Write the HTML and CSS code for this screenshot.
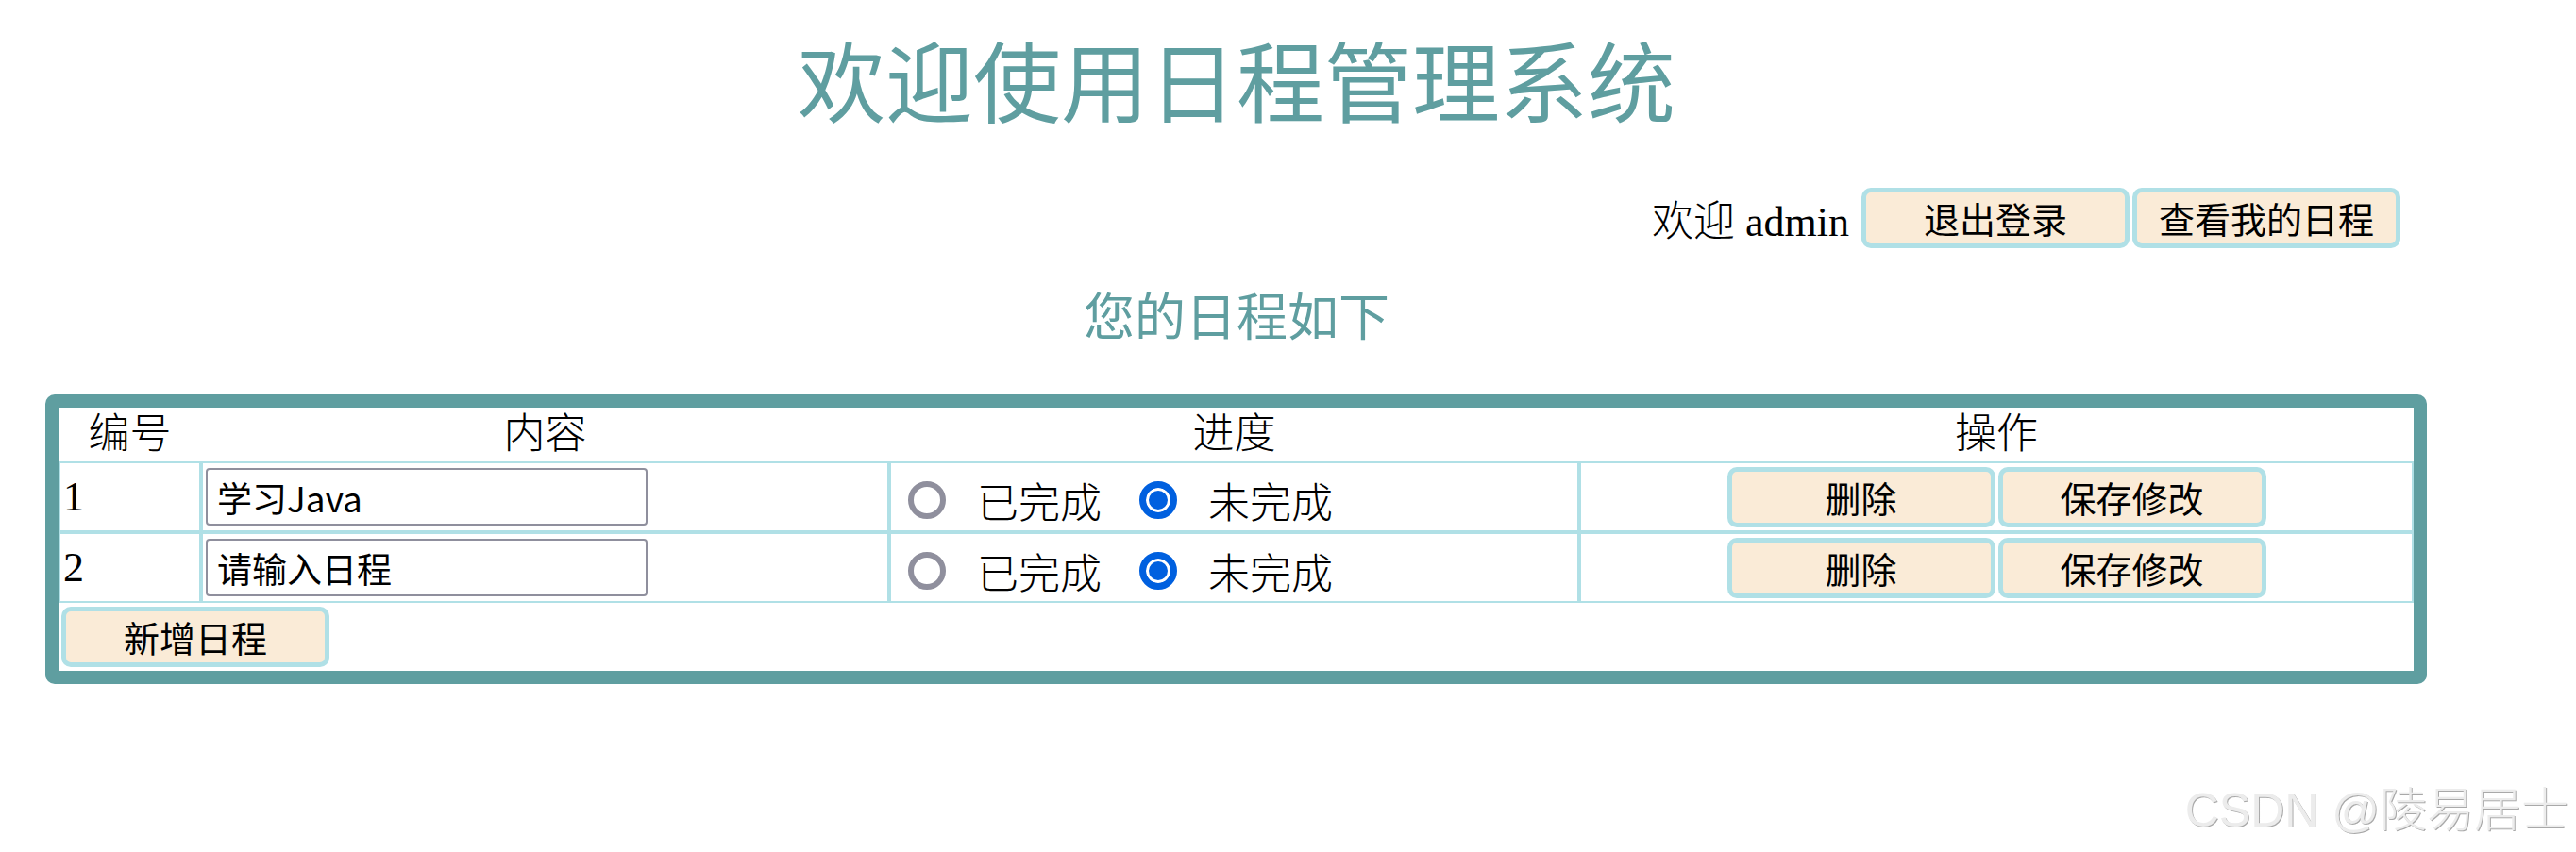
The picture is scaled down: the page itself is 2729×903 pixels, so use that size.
FILE: index.html
```html
<!DOCTYPE html>
<html lang="zh-CN">
<head>
  <meta charset="UTF-8" />
  <title>日程管理系统</title>
  <meta name="viewport" content="width=device-width, initial-scale=1" />
  <link rel="stylesheet" href="styles.css">
</head>
<body>

  <div class="page">
    <h1 class="title">欢迎使用日程管理系统</h1>

    <!-- 用户信息 -->
    <div class="user-bar">
      <span class="greeting">欢迎 admin</span>
      <button class="btn">退出登录</button>
      <button class="btn">查看我的日程</button>
    </div>

    <h3 class="subtitle">您的日程如下</h3>

    <!-- 日程列表 -->
    <table class="schedule">
      <thead>
        <tr>
          <th class="col-id">编号</th>
          <th class="col-content">内容</th>
          <th class="col-progress">进度</th>
          <th class="col-action">操作</th>
        </tr>
      </thead>
      <tbody>
        <tr>
          <td class="cell-id">1</td>
          <td><input type="text" class="content-input" value="学习Java" /></td>
          <td>
            <div class="progress">
              <input type="radio" name="done1" /><span>已完成</span>
              <input type="radio" name="done1" checked /><span>未完成</span>
            </div>
          </td>
          <td class="cell-action"><button class="btn">删除</button><button class="btn">保存修改</button></td>
        </tr>
        <tr>
          <td class="cell-id">2</td>
          <td><input type="text" class="content-input" value="请输入日程" /></td>
          <td>
            <div class="progress">
              <input type="radio" name="done2" /><span>已完成</span>
              <input type="radio" name="done2" checked /><span>未完成</span>
            </div>
          </td>
          <td class="cell-action"><button class="btn">删除</button><button class="btn">保存修改</button></td>
        </tr>
        <tr class="add-row">
          <td colspan="4"><button class="btn">新增日程</button></td>
        </tr>
      </tbody>
    </table>
  </div>

  <div class="watermark">CSDN @陵易居士</div>

</body>
</html>
```

FILE: styles.css
```css
* {
  box-sizing: border-box;
}

body {
  margin: 0;
  background: #fff;
  color: #000;
  font-family: "Liberation Serif", "Noto Sans CJK SC", serif;
}

.page {
  width: 2620px;
}

.title {
  margin: 0;
  padding-top: 33px;
  height: 133px;
  line-height: 100px;
  font-size: 93px;
  font-weight: 400;
  font-family: "Noto Sans CJK SC", sans-serif;
  color: cadetblue;
  text-align: center;
}

.user-bar {
  display: flex;
  justify-content: flex-end;
  align-items: center;
  height: 65px;
  margin-top: 65px;
  padding-right: 77px;
}

.greeting {
  font-size: 44px;
  font-weight: 300;
  margin-right: 13px;
}

.user-bar .btn + .btn {
  margin-left: 3px;
}

.btn {
  width: 284px;
  height: 64px;
  padding: 0;
  background: antiquewhite;
  border: 5px solid powderblue;
  border-radius: 10px;
  font-family: "Noto Sans CJK SC", sans-serif;
  font-size: 38px;
  line-height: 1;
  color: #000;
  vertical-align: middle;
}

.subtitle {
  margin: 40px 0 0;
  line-height: 60px;
  font-size: 54px;
  font-weight: 400;
  font-family: "Noto Sans CJK SC", sans-serif;
  color: cadetblue;
  text-align: center;
}

.schedule {
  width: 2523px;
  margin: 55px 0 0 48px;
  border: 14px solid cadetblue;
  border-radius: 10px;
  border-spacing: 0;
  table-layout: fixed;
}

.schedule th {
  height: 57px;
  padding: 0;
  font-size: 44px;
  font-weight: 300;
  line-height: 50px;
  vertical-align: middle;
}

.col-id { width: 151px; }
.col-content { width: 729px; }
.col-progress { width: 731px; }
.col-action { width: 884px; }

.schedule td {
  height: 75px;
  padding: 0 3px;
  border: 2px solid powderblue;
  font-size: 44px;
  vertical-align: middle;
}

.cell-id {
  padding-top: 2px;
}

.content-input {
  display: block;
  width: 468px;
  height: 61px;
  padding: 0 10px;
  border: 2px solid #8f8f9d;
  border-radius: 4px;
  font-family: "Noto Sans CJK SC", sans-serif;
  font-size: 37px;
  color: #000;
}

.progress {
  display: flex;
  align-items: center;
  padding: 6px 0 0 15px;
  font-family: "Noto Sans CJK SC", sans-serif;
  font-weight: 300;
  font-size: 44px;
}

.progress input {
  appearance: none;
  width: 40px;
  height: 40px;
  margin: 0 33px 0 0;
  border: 6px solid #8f8f9d;
  border-radius: 50%;
  background: #fff;
}

.progress input:checked {
  border: 7px solid #0060df;
  background: #0060df;
  box-shadow: inset 0 0 0 3px #fff;
}

.progress span {
  margin-right: 40px;
}

.cell-action {
  text-align: center;
}

.cell-action .btn + .btn {
  margin-left: 3px;
}

.schedule .add-row td {
  height: 72px;
  border: none;
}

.watermark {
  position: absolute;
  right: 8px;
  top: 818px;
  font-family: "Liberation Sans", "Noto Sans CJK SC", sans-serif;
  font-size: 50px;
  font-weight: 300;
  color: #ececec;
  text-shadow: 1px 1px 0 #a9a9a9, -1px -1px 0 #fff;
}
```
